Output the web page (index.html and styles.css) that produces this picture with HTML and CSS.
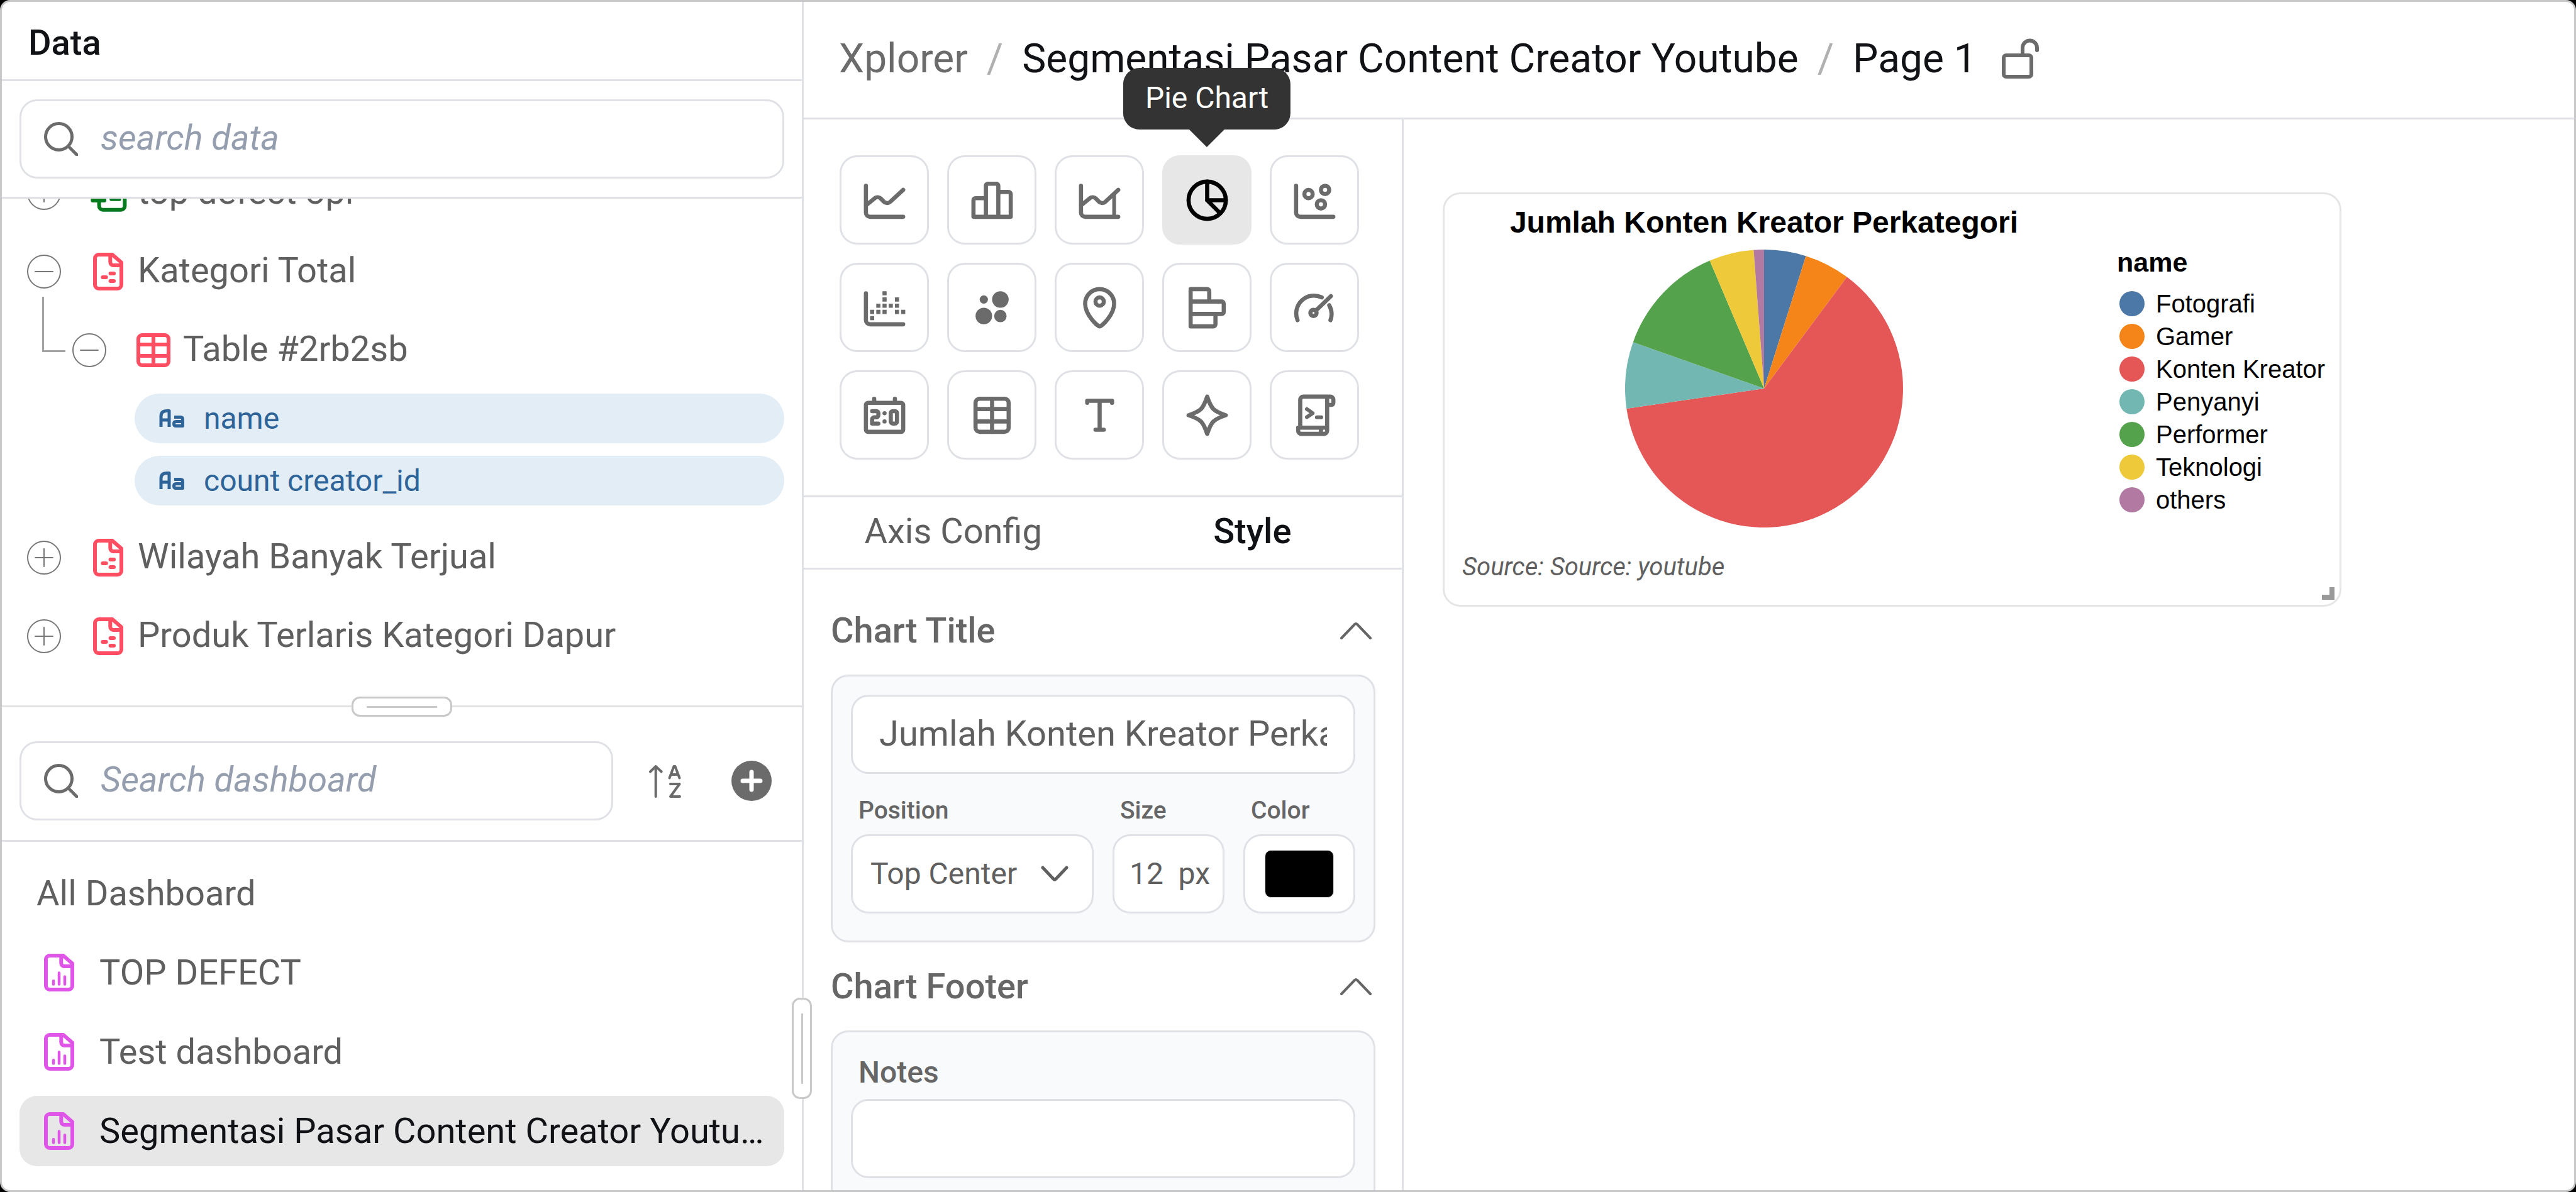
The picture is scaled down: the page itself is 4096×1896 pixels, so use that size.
FILE: index.html
```html
<!DOCTYPE html>
<html lang="id">
<head>
<meta charset="utf-8">
<title>Xplorer</title>
<link rel="stylesheet" href="styles.css">
</head>
<body>
<svg class="sprite" aria-hidden="true">
  <symbol id="search" viewBox="0 0 54 54"><circle cx="23.5" cy="23.5" r="21"/><path d="M39 39l13 13"/></symbol>
  <symbol id="plus" viewBox="0 0 54 54"><circle cx="27" cy="27" r="26"/><path d="M13 27h28M27 13v28"/></symbol>
  <symbol id="minus" viewBox="0 0 54 54"><circle cx="27" cy="27" r="26"/><path d="M13 27h28"/></symbol>
  <symbol id="file" viewBox="0 0 24 24"><path d="M5 5a2 2 0 0 1 2-2h7.2L19 7.2V19a2 2 0 0 1-2 2H7a2 2 0 0 1-2-2zM13.1 3.5V7a1.7 1.7 0 0 0 1.7 1.7H19M9.1 15h1.8M13.2 13H15M13.2 17H15"/></symbol>
  <symbol id="report" viewBox="0 0 24 24"><path d="M5 5a2 2 0 0 1 2-2h7.2L19 7.2V19a2 2 0 0 1-2 2H7a2 2 0 0 1-2-2zM13.1 3.5V7a1.7 1.7 0 0 0 1.7 1.7H19"/><path class="thin" d="M9 16.4v1.8M12 12.2v6M15 14.2v4"/></symbol>
  <symbol id="table" viewBox="0 0 24 24"><rect x="4" y="4" width="16" height="16" rx="2"/><path d="M4 9h16M4 15h16M12 4v16"/></symbol>
  <symbol id="text-type" viewBox="0 0 42 30"><path d="M3 28V11q0-8.500 9-8.500h4V28M3 17h13M24 12.500h10q3.500 0 3.500 3.500v10.500H27q-3.500 0-3.500-3.500t3.500-3.500h10"/></symbol>
  <symbol id="chevron-up" viewBox="0 0 50 30"><path d="M2 27L23 5q2-2 4 0l21 22"/></symbol>
</svg>

<div class="app">
  <aside class="sidebar">
    <section class="data-pane">
      <h2 class="pane-title">Data</h2>
      <div class="data-search">
        <label class="search-box">
          <svg class="icon-search"><use href="#search"/></svg>
          <input type="search" placeholder="search data" aria-label="search data">
        </label>
      </div>
      <div class="tree">
        <ul class="tree-list">
          <li class="tree-row">
            <button class="toggle" aria-label="Expand"><svg><use href="#plus"/></svg></button>
            <svg class="icon green" viewBox="0 0 24 24"><rect x="7.200" y="3" width="13.600" height="17.900" rx="2"/><path class="thin" d="M13.500 15.500h4.600"/><rect class="solid" x="2.800" y="7" width="8.200" height="10" rx="1"/></svg>
            <span>top defect opi</span>
          </li>
          <li class="tree-row">
            <button class="toggle" aria-label="Collapse"><svg><use href="#minus"/></svg></button>
            <svg class="icon red"><use href="#file"/></svg>
            <span>Kategori Total</span>
          </li>
          <li class="tree-row child">
            <button class="toggle" aria-label="Collapse"><svg><use href="#minus"/></svg></button>
            <svg class="icon red"><use href="#table"/></svg>
            <span>Table #2rb2sb</span>
          </li>
          <li>
            <ul class="fields">
              <li class="field"><svg class="icon-type"><use href="#text-type"/></svg>name</li>
              <li class="field"><svg class="icon-type"><use href="#text-type"/></svg>count creator_id</li>
            </ul>
          </li>
          <li class="tree-row">
            <button class="toggle" aria-label="Expand"><svg><use href="#plus"/></svg></button>
            <svg class="icon red"><use href="#file"/></svg>
            <span>Wilayah Banyak Terjual</span>
          </li>
          <li class="tree-row">
            <button class="toggle" aria-label="Expand"><svg><use href="#plus"/></svg></button>
            <svg class="icon red"><use href="#file"/></svg>
            <span>Produk Terlaris Kategori Dapur</span>
          </li>
        </ul>
      </div>
    </section>

    <section class="dashboard-pane">
      <div class="grip grip-row"></div>
      <div class="dashboard-head">
        <label class="search-box">
          <svg class="icon-search"><use href="#search"/></svg>
          <input type="search" placeholder="Search dashboard" aria-label="Search dashboard">
        </label>
        <button class="sort" aria-label="Sort A to Z">
          <svg viewBox="0 0 54 54"><path d="M11.700 4v48M3 12.500L11.700 4l9 8.500"/><path d="M33.500 22.500l7-18.500h2l7 18.500M36 17h11M35 32h14.500L35 52h15"/></svg>
        </button>
        <button class="add" aria-label="Add dashboard">
          <svg viewBox="0 0 64 64"><circle cx="32" cy="32" r="32"/><path d="M32 18v28M18 32h28"/></svg>
        </button>
      </div>
      <nav class="dashboard-list">
        <a href="#" class="dash-row">All Dashboard</a>
        <a href="#" class="dash-row"><svg class="icon purple"><use href="#report"/></svg><span>TOP DEFECT</span></a>
        <a href="#" class="dash-row"><svg class="icon purple"><use href="#report"/></svg><span>Test dashboard</span></a>
        <a href="#" class="dash-row active"><svg class="icon purple"><use href="#report"/></svg><span>Segmentasi Pasar Content Creator Youtube</span></a>
      </nav>
    </section>
    <div class="grip grip-col"></div>
  </aside>

  <main class="main">
    <header class="topbar">
      <nav class="crumbs">
        <a href="#" class="muted">Xplorer</a><span class="slash">/</span>
        <a href="#">Segmentasi Pasar Content Creator Youtube</a><span class="slash">/</span>
        <a href="#">Page 1</a>
      </nav>
      <button class="lock" aria-label="Unlocked">
        <svg viewBox="0 0 60 64"><rect x="3" y="27" width="44" height="34" rx="4"/><path d="M33 27V15a11.500 11.500 0 0 1 23 0v4"/></svg>
      </button>
    </header>

    <div class="workspace">
      <section class="config">
        <div class="chart-types">
          <button class="tile" aria-label="Line Chart"><svg viewBox="0 0 24 24"><path d="M3 5v13a2 2 0 0 0 2 2h16M3 14.500l4.300-3.500a2.200 2.200 0 0 1 2.900.200l1.500 1.500a2.200 2.200 0 0 0 3 .100L21 7"/></svg></button>
          <button class="tile" aria-label="Bar Chart"><svg viewBox="0 0 24 24"><path d="M9 20V5a1 1 0 0 1 1-1h4a1 1 0 0 1 1 1v15M9 11H4a1 1 0 0 0-1 1v8h18V9a1 1 0 0 0-1-1h-5"/></svg></button>
          <button class="tile" aria-label="Area Chart"><svg viewBox="0 0 24 24"><path d="M3 5v13a2 2 0 0 0 2 2h16M3 14.500l4.300-3.500a2.200 2.200 0 0 1 2.900.200l1.500 1.500a2.200 2.200 0 0 0 3 .100L21 7"/><path class="medium" d="M19 9v11"/></svg></button>
          <button class="tile selected" aria-label="Pie Chart"><svg viewBox="0 0 24 24"><circle cx="12" cy="12" r="9"/><path d="M12 3v9h9M12 12l6 6"/></svg><span class="tooltip" role="tooltip">Pie Chart</span></button>
          <button class="tile" aria-label="Scatter Plot"><svg viewBox="0 0 24 24"><path d="M3 5v13a2 2 0 0 0 2 2h16"/><circle cx="9" cy="9" r="2"/><circle cx="17" cy="7" r="2"/><circle cx="15" cy="14" r="2"/></svg></button>

          <button class="tile" aria-label="Dot Plot"><svg viewBox="0 0 24 24"><path d="M3 5v13a2 2 0 0 0 2 2h16"/><path class="dots" d="M11 5h2M11 8h2M17 8h2M8 11h2M11 11h2M14 11h2M17 11h2M5 14h2M8 14h2M11 14h2M17 14h2M20 14h2M5 17h2"/></svg></button>
          <button class="tile" aria-label="Bubble Chart"><svg viewBox="0 0 24 24"><g class="solid"><circle cx="8" cy="8" r="2"/><circle cx="16" cy="8" r="4"/><circle cx="8" cy="16" r="4"/><circle cx="16" cy="16" r="3"/></g></svg></button>
          <button class="tile" aria-label="Map"><svg viewBox="0 0 24 24"><path d="M12 21c-1 0-7-5.600-7-11a7 7 0 0 1 14 0c0 5.400-6 11-7 11z"/><circle cx="12" cy="9" r="2"/></svg></button>
          <button class="tile" aria-label="Horizontal Bar Chart"><svg viewBox="0 0 24 24"><path d="M13 9V4a1 1 0 0 0-1-1H4v18h11a1 1 0 0 0 1-1v-5M4 9h15a1 1 0 0 1 1 1v4a1 1 0 0 1-1 1H4"/></svg></button>
          <button class="tile" aria-label="Gauge"><svg viewBox="0 0 24 24"><path d="M3.700 18A8.600 8.600 0 0 1 15.400 7M19 10.800A8.600 8.600 0 0 1 19.600 18"/><circle cx="11.400" cy="14.500" r="1.500"/><path d="M12.600 13.300l7.200-6.900"/></svg></button>

          <button class="tile" aria-label="Scorecard"><svg viewBox="0 0 24 24"><rect x="3" y="6" width="18" height="14" rx="1"/><path d="M7 4v2M17 4v2M6 10h2a1 1 0 0 1 1 1v1a1 1 0 0 1-1 1H7a1 1 0 0 0-1 1v2h3"/><rect x="15" y="10" width="3" height="6" rx="1"/><g class="solid"><circle cx="12" cy="11" r="1"/><circle cx="12" cy="15" r="1"/></g></svg></button>
          <button class="tile" aria-label="Table"><svg><use href="#table"/></svg></button>
          <button class="tile" aria-label="Text"><svg viewBox="0 0 24 24"><path d="M6 6V5h12v1M12 5v14M10 19h4"/></svg></button>
          <button class="tile" aria-label="Insight"><svg viewBox="0 0 24 24"><path d="M12 3c1 3 2 5 3 6s3 2 6 3c-3 1-5 2-6 3s-2 3-3 6c-1-3-2-5-3-6s-3-2-6-3c3-1 5-2 6-3s2-3 3-6z"/></svg></button>
          <button class="tile" aria-label="Script"><svg viewBox="0 0 24 24"><path d="M5 18V4.500A1.500 1.500 0 0 1 6.500 3h13A1.500 1.500 0 0 1 21 4.500V6a1 1 0 0 1-1 1h-2M18 3v16.500a1.500 1.500 0 0 1-1.500 1.500h-11A1.500 1.500 0 0 1 4 19.500V18h13M15 18.500v1.500"/><path class="medium" d="M8.200 9l2.800 2-2.800 1.900M13 13h2.200"/></svg></button>
        </div>

        <div class="tabs" role="tablist">
          <button class="tab" role="tab">Axis Config</button>
          <button class="tab current" role="tab" aria-selected="true">Style</button>
        </div>

        <div class="style-body">
          <button class="section-head">Chart Title<svg><use href="#chevron-up"/></svg></button>
          <div class="group">
            <input class="control title-input" type="text" value="Jumlah Konten Kreator Perkategori" aria-label="Chart Title">
            <div class="fields-row">
              <div>
                <label for="pos">Position</label>
                <div class="select-wrap">
                  <select id="pos" class="control"><option>Top Center</option></select>
                  <svg viewBox="0 0 44 26"><path d="M3 3l17 18q2 2 4 0L41 3"/></svg>
                </div>
              </div>
              <div>
                <label for="size">Size</label>
                <div class="control size-box"><input id="size" type="text" value="12"><span>px</span></div>
              </div>
              <div>
                <label for="color">Color</label>
                <div class="control color-box"><input id="color" type="color" value="#000000"></div>
              </div>
            </div>
          </div>
          <button class="section-head">Chart Footer<svg><use href="#chevron-up"/></svg></button>
          <div class="group">
            <label class="notes-label" for="notes">Notes</label>
            <input id="notes" class="control" type="text">
          </div>
        </div>
      </section>

      <section class="canvas">
        <article class="chart-card">
          <div class="chart-main">
            <h3>Jumlah Konten Kreator Perkategori</h3>
            <svg class="pie" viewBox="-221 -221 442 442" role="img" aria-label="Pie chart">
              <path fill="#4c78a8" d="M0 0V-221A221 221 0 0 1 66.500-210.800Z"/>
              <path fill="#f58518" d="M0 0L66.500-210.800A221 221 0 0 1 131.800-177.400Z"/>
              <path fill="#e45756" d="M0 0L131.800-177.400A221 221 0 1 1-218.700 31.900Z"/>
              <path fill="#72b7b2" d="M0 0L-218.700 31.900A221 221 0 0 1-208.300-73.800Z"/>
              <path fill="#54a24b" d="M0 0L-208.300-73.800A221 221 0 0 1-86.400-203.400Z"/>
              <path fill="#eeca3b" d="M0 0L-86.400-203.400A221 221 0 0 1-16.600-220.400Z"/>
              <path fill="#b279a2" d="M0 0L-16.600-220.400A221 221 0 0 1 0-221Z"/>
            </svg>
          </div>
          <div class="legend">
            <h4>name</h4>
            <ul>
              <li class="c1">Fotografi</li>
              <li class="c2">Gamer</li>
              <li class="c3">Konten Kreator</li>
              <li class="c4">Penyanyi</li>
              <li class="c5">Performer</li>
              <li class="c6">Teknologi</li>
              <li class="c7">others</li>
            </ul>
          </div>
          <p class="source">Source: Source: youtube</p>
          <span class="resize"></span>
        </article>
      </section>
    </div>
  </main>
</div>
</body>
</html>
```
FILE: styles.css
```css
:root {
  --line: #dfe1e6;
  --text: #5f5f5f;
  --ink: #111216;
  --icon: #6b6b6b;
  --fs-s: 39px;
  --fs-m: 48px;
  --fs-l: 56px;
  --fs-xl: 64px;
}

* { box-sizing: border-box; }

body {
  margin: 0;
  background: #000;
  color: var(--text);
  font-family: Roboto, "Liberation Sans", sans-serif;
  font-size: var(--fs-l);
}

ul, h2, h3, h4, p { margin: 0; padding: 0; list-style: none; }
a { color: inherit; text-decoration: none; }
button, input, select { font: inherit; color: inherit; }
button { border: 0; padding: 0; background: none; }

svg {
  display: block;
  flex: none;
  fill: none;
  stroke: currentColor;
  stroke-linecap: round;
  stroke-linejoin: round;
}
.sprite { position: absolute; width: 0; height: 0; }

.app {
  display: flex;
  height: 100vh;
  overflow: hidden;
  background: #fff;
  border: 3px solid #c8c8c8;
  border-radius: 16px;
}

/* Sidebar */
.sidebar {
  position: relative;
  flex: none;
  width: 1275px;
  display: flex;
  flex-direction: column;
  border-right: 3px solid var(--line);
}
.data-pane {
  flex: 35 35 0;
  min-height: 0;
  display: flex;
  flex-direction: column;
}
.pane-title {
  flex: none;
  height: 126px;
  padding: 0 42px;
  border-bottom: 3px solid var(--line);
  color: var(--ink);
  font-size: var(--fs-l);
  font-weight: 500;
  line-height: 130px;
}
.data-search {
  flex: none;
  padding: 29px 28px;
  border-bottom: 3px solid var(--line);
}
.search-box {
  flex: 1;
  min-width: 0;
  display: flex;
  align-items: center;
  gap: 36px;
  height: 126px;
  padding: 0 36px;
  border: 3px solid var(--line);
  border-radius: 28px;
}
.search-box input {
  flex: 1;
  min-width: 0;
  padding: 0 0 4px;
  border: 0;
  outline: 0;
  background: none;
  appearance: none;
}
.search-box input::placeholder { color: #949eae; font-style: italic; opacity: 1; }
.icon-search { width: 54px; height: 54px; stroke-width: 5; color: var(--icon); }

.tree { flex: 1; min-height: 0; overflow: hidden; }
.tree-list { margin-top: -72px; }
.tree-row {
  display: flex;
  align-items: center;
  height: 125px;
  padding-left: 40px;
}
.tree-row span { padding-bottom: 3px; }
.tree-row.child { position: relative; padding-left: 112px; }
.tree-row.child::before {
  content: "";
  position: absolute;
  left: 64px;
  top: -22px;
  width: 34px;
  height: 85px;
  border: solid #a3a3a3;
  border-width: 0 0 3px 3px;
}
.toggle { width: 54px; height: 54px; margin-right: 39px; color: #777; }
.toggle svg { width: 54px; height: 54px; stroke-width: 2; }
.icon { width: 72px; height: 72px; stroke-width: 2; }
.tree-row .icon { margin-right: 11px; }
.icon.red { color: #ff4d61; }
.icon.green { color: #067a1f; }
.icon.purple { color: #df55e8; }
.thin { stroke-width: 1.5; }
.medium { stroke-width: 1.8; }
.solid { fill: currentColor; stroke: none; }

.fields {
  display: grid;
  gap: 20px;
  padding: 7px 28px 20px 211px;
}
.field {
  display: flex;
  align-items: center;
  gap: 29px;
  height: 79px;
  padding-left: 39px;
  border-radius: 40px;
  background: #e2edf6;
  color: #2f6499;
  font-size: var(--fs-m);
}
.icon-type { width: 42px; height: 30px; stroke-width: 5; stroke-linecap: butt; }

.dashboard-pane {
  position: relative;
  flex: 24 24 0;
  min-height: 0;
  border-top: 3px solid #e2e2e4;
}
.dashboard-head {
  display: flex;
  align-items: center;
  padding: 54px 48px 31px 28px;
  border-bottom: 3px solid var(--line);
}
.sort { margin-left: 56px; color: var(--icon); }
.sort svg { width: 54px; height: 54px; stroke-width: 4; }
.add { margin-left: 78px; color: #fff; }
.add svg { width: 64px; height: 64px; stroke-width: 7; }
.add circle { fill: var(--icon); stroke: none; }

.dashboard-list {
  display: grid;
  gap: 14px;
  padding: 26px 28px 0;
}
.dash-row {
  display: flex;
  align-items: center;
  gap: 28px;
  min-width: 0;
  height: 112px;
  padding: 0 28px 0 27px;
  border-radius: 28px;
}
.dash-row span { overflow: hidden; text-overflow: ellipsis; white-space: nowrap; }
.dash-row.active { background: #e7e7e7; color: var(--ink); }

.grip {
  position: absolute;
  z-index: 2;
  display: grid;
  place-items: center;
  background: #fff;
  border: 3px solid #c9c9c9;
  border-radius: 13px;
}
.grip::after { content: ""; background: #c9c9c9; }
.grip-row { left: calc(50% - 80px); top: -17px; width: 160px; height: 32px; }
.grip-row::after { width: 112px; height: 3px; }
.grip-col { right: -16px; bottom: 145px; width: 32px; height: 161px; }
.grip-col::after { width: 3px; height: 112px; }

/* Header */
.main { flex: 1; min-width: 0; display: flex; flex-direction: column; }
.topbar {
  flex: none;
  display: flex;
  align-items: center;
  gap: 40px;
  height: 187px;
  padding: 0 56px 4px;
  border-bottom: 3px solid var(--line);
  color: var(--ink);
  font-size: var(--fs-xl);
}
.crumbs { display: flex; gap: 30px; white-space: nowrap; }
.crumbs .muted { color: #6b6b6b; }
.slash { color: #b0b0b0; }
.lock { color: var(--icon); }
.lock svg { width: 60px; height: 64px; stroke-width: 6; }

.workspace { flex: 1; min-height: 0; display: flex; }

/* Config panel */
.config {
  flex: none;
  width: 954px;
  display: flex;
  flex-direction: column;
  border-right: 3px solid var(--line);
}
.chart-types {
  display: grid;
  grid-template-columns: repeat(5, 142px);
  gap: 29px;
  padding: 57px;
  border-bottom: 3px solid var(--line);
}
.tile {
  position: relative;
  display: grid;
  place-items: center;
  height: 142px;
  border: 3px solid var(--line);
  border-radius: 28px;
  color: var(--icon);
}
.tile svg { width: 79px; height: 79px; stroke-width: 2; }
.tile .dots { stroke-linecap: butt; }
.tile.selected { background: #e7e7e7; border-color: #e7e7e7; color: #000; }
.tooltip {
  position: absolute;
  z-index: 10;
  left: 50%;
  bottom: calc(100% + 44px);
  transform: translateX(-50%);
  padding: 0 35px 3px;
  border-radius: 26px;
  background: #333;
  color: #fff;
  font-size: var(--fs-m);
  line-height: 95px;
  white-space: nowrap;
}
.tooltip::after {
  content: "";
  position: absolute;
  top: 100%;
  left: calc(50% - 28px);
  border: 28px solid transparent;
  border-top-color: #333;
  border-bottom: 0;
}

.tabs {
  flex: none;
  display: grid;
  grid-template-columns: 1fr 1fr;
  height: 115px;
  border-bottom: 3px solid var(--line);
}
.tab { padding-bottom: 4px; }
.tab.current { color: var(--ink); font-weight: 500; }

.style-body { flex: 1; min-height: 0; overflow: hidden; padding: 27px 42px 0 43px; }
.section-head {
  display: flex;
  align-items: center;
  justify-content: space-between;
  width: 100%;
  height: 140px;
  padding-right: 6px;
  color: #666;
  font-weight: 500;
}
.section-head svg { width: 50px; height: 30px; stroke-width: 4; }
.group {
  padding: 29px 29px 43px;
  border: 3px solid var(--line);
  border-radius: 28px;
  background: #f9fafc;
}
.group label {
  display: block;
  margin: 35px 0 15px;
  padding-left: 12px;
  color: #666;
  font-size: var(--fs-s);
  font-weight: 500;
  line-height: 46px;
}
.group .notes-label { margin-top: 8px; font-size: var(--fs-m); line-height: 54px; }
.control {
  display: block;
  width: 100%;
  height: 126px;
  margin: 0;
  padding: 0 28px 2px;
  border: 3px solid var(--line);
  border-radius: 28px;
  outline: 0;
  background: #fff;
  font-size: var(--fs-m);
}
.title-input { padding: 0 42px 2px; font-size: var(--fs-l); }
.fields-row {
  display: grid;
  grid-template-columns: 1fr 178px 178px;
  gap: 30px;
}
.select-wrap { display: grid; align-items: center; }
.select-wrap > * { grid-area: 1 / 1; }
.select-wrap select { appearance: none; }
.select-wrap svg {
  justify-self: end;
  width: 44px;
  height: 26px;
  margin-right: 40px;
  stroke-width: 5;
  pointer-events: none;
}
.size-box { display: flex; align-items: center; justify-content: space-between; padding: 0 20px 2px 24px; }
.size-box input { width: 60px; padding: 0; border: 0; outline: 0; background: none; }
.color-box { display: grid; place-items: center; padding: 0; }
.color-box input {
  width: 110px;
  height: 76px;
  padding: 0;
  border: 0;
  background: none;
  appearance: none;
}
.color-box input::-webkit-color-swatch-wrapper { padding: 0; }
.color-box input::-webkit-color-swatch { border: 1px solid #ddd; border-radius: 10px; }

/* Canvas */
.canvas { flex: 1; min-width: 0; padding: 116px 62px; }
.chart-card {
  position: relative;
  display: grid;
  grid-template-columns: 1016px 1fr;
  width: 1429px;
  padding: 17px 0 37px;
  border: 3px solid #e5e5e5;
  border-radius: 28px;
  color: #000;
  font-family: "Liberation Sans", Arial, sans-serif;
}
.chart-main { display: grid; justify-items: center; gap: 15px; }
.chart-main h3 { font-size: 48px; line-height: 56px; }
.pie { width: 442px; height: 442px; stroke: none; }
.legend { padding: 65px 0 0 53px; }
.legend h4 { margin-bottom: 14px; font-size: 43px; line-height: 52px; }
.legend li {
  display: flex;
  align-items: center;
  gap: 18px;
  padding-left: 4px;
  font-size: 40px;
  line-height: 52px;
  white-space: nowrap;
}
.legend li::before { content: ""; width: 40px; height: 40px; border-radius: 50%; background: var(--c); }
.c1 { --c: #4c78a8; }
.c2 { --c: #f58518; }
.c3 { --c: #e45756; }
.c4 { --c: #72b7b2; }
.c5 { --c: #54a24b; }
.c6 { --c: #eeca3b; }
.c7 { --c: #b279a2; }
.source {
  grid-column: 1 / -1;
  margin-top: 40px;
  padding-left: 28px;
  color: var(--text);
  font-family: Roboto, sans-serif;
  font-size: 40px;
  font-style: italic;
  line-height: 46px;
}
.resize {
  position: absolute;
  right: 8px;
  bottom: 8px;
  width: 20px;
  height: 20px;
  border: solid #999;
  border-width: 0 8px 8px 0;
}
```
